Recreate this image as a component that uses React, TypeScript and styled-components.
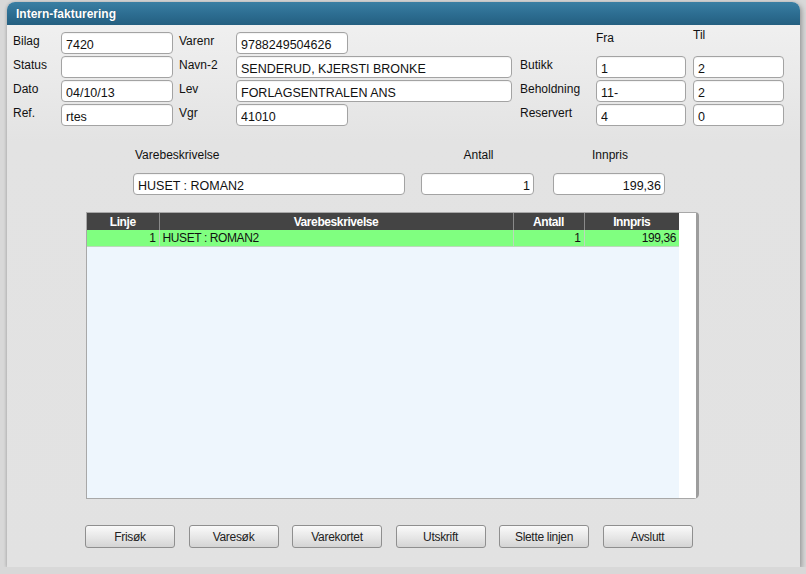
import styled, { createGlobalStyle } from 'styled-components';

const GlobalStyle = createGlobalStyle`
  html, body {
    margin: 0;
    padding: 0;
    background: #d8d8d8;
    font-family: 'Liberation Sans', Arial, sans-serif;
  }
`;

type Line = { linje: number; tekst: string; antall: number; innpris: string };

const lines: Line[] = [{ linje: 1, tekst: 'HUSET : ROMAN2', antall: 1, innpris: '199,36' }];

const buttons = ['Frisøk', 'Varesøk', 'Varekortet', 'Utskrift', 'Slette linjen', 'Avslutt'];

export default function App() {
  return (
    <>
      <GlobalStyle />
      <Window>
        <TitleBar>Intern-fakturering</TitleBar>
        <Body>
          <HeadForm>
            <Label>Bilag</Label>
            <Field $col="2" defaultValue="7420" />
            <Label $col="4">Varenr</Label>
            <Field $col="5" defaultValue="9788249504626" />
            <TopLabel $col="9">Fra</TopLabel>
            <TopLabel $col="11" $raise>Til</TopLabel>

            <Label>Status</Label>
            <Field $col="2" defaultValue="" />
            <Label $col="4">Navn-2</Label>
            <Field $col="5 / span 2" defaultValue="SENDERUD, KJERSTI BRONKE" />
            <Label $col="8">Butikk</Label>
            <Field $col="9" defaultValue="1" />
            <Field $col="11" defaultValue="2" />

            <Label>Dato</Label>
            <Field $col="2" defaultValue="04/10/13" />
            <Label $col="4">Lev</Label>
            <Field $col="5 / span 2" defaultValue="FORLAGSENTRALEN ANS" />
            <Label $col="8">Beholdning</Label>
            <Field $col="9" defaultValue="11-" />
            <Field $col="11" defaultValue="2" />

            <Label>Ref.</Label>
            <Field $col="2" defaultValue="rtes" />
            <Label $col="4">Vgr</Label>
            <Field $col="5" defaultValue="41010" />
            <Label $col="8">Reservert</Label>
            <Field $col="9" defaultValue="4" />
            <Field $col="11" defaultValue="0" />
          </HeadForm>

          <EntryRow>
            <EntryCol $w={272} $align="left">
              <EntryLabel>Varebeskrivelse</EntryLabel>
              <Field defaultValue="HUSET : ROMAN2" />
            </EntryCol>
            <EntryCol $w={113} $align="center">
              <EntryLabel>Antall</EntryLabel>
              <Field $right defaultValue="1" />
            </EntryCol>
            <EntryCol $w={112} $align="center">
              <EntryLabel>Innpris</EntryLabel>
              <Field $right defaultValue="199,36" />
            </EntryCol>
          </EntryRow>

          <GridBox>
            <Table>
              <colgroup>
                <col style={{ width: 72 }} />
                <col style={{ width: 354 }} />
                <col style={{ width: 71 }} />
                <col style={{ width: 95 }} />
              </colgroup>
              <thead>
                <tr>
                  <Th>Linje</Th>
                  <Th>Varebeskrivelse</Th>
                  <Th>Antall</Th>
                  <Th>Innpris</Th>
                </tr>
              </thead>
              <tbody>
                {lines.map((l) => (
                  <Row key={l.linje}>
                    <Td $right>{l.linje}</Td>
                    <Td>{l.tekst}</Td>
                    <Td $right>{l.antall}</Td>
                    <Td $right>{l.innpris}</Td>
                  </Row>
                ))}
              </tbody>
            </Table>
            <ScrollStrip />
          </GridBox>

          <ButtonBar>
            {buttons.map((b) => (
              <Button key={b}>{b}</Button>
            ))}
          </ButtonBar>
        </Body>
      </Window>
    </>
  );
}

const Window = styled.div`
  margin: 2px 0 0 7px;
  width: 793px;
  height: 565px;
  display: flex;
  flex-direction: column;
  border-radius: 8px 8px 0 0;
  background: linear-gradient(#f2f2f2, #e3e3e3 140px, #e2e2e2);
  box-shadow: 2px 2px 5px rgba(0, 0, 0, 0.28), -1px 0 3px rgba(0, 0, 0, 0.12);
`;

const TitleBar = styled.div`
  height: 23px;
  flex: none;
  border-radius: 8px 8px 0 0;
  background: linear-gradient(#3b7fa3, #2d6e92 50%, #245f80);
  color: #fff;
  font-weight: bold;
  font-size: 12px;
  line-height: 24px;
  padding-left: 9px;
  text-shadow: 0 0 1px rgba(0, 0, 0, 0.3);
`;

const Body = styled.div`
  flex: 1;
  display: flex;
  flex-direction: column;
  padding: 7px 0 0 6px;
`;

const HeadForm = styled.div`
  display: grid;
  grid-template-columns: 48px 112px 6px 57px 112px 164px 8px 76px 90px 7px 91px;
  grid-auto-rows: 22px;
  row-gap: 2px;
  align-items: stretch;
`;

const Label = styled.div<{ $col?: string }>`
  grid-column: ${(p) => p.$col ?? '1'};
  font-size: 12px;
  color: #111;
  padding-top: 2px;
  white-space: nowrap;
`;

const TopLabel = styled.div<{ $col: string; $raise?: boolean }>`
  grid-column: ${(p) => p.$col};
  font-size: 12px;
  color: #111;
  margin-top: ${(p) => (p.$raise ? '-4px' : '-1px')};
`;

const Field = styled.input.attrs({ readOnly: true, type: 'text' })<{ $col?: string; $right?: boolean }>`
  grid-column: ${(p) => p.$col ?? 'auto'};
  box-sizing: border-box;
  width: 100%;
  height: 22px;
  margin: 0;
  padding: 3px 3px 0 4px;
  border: 1px solid #a3a3a3;
  border-radius: 4px;
  background: #fff;
  font-family: 'Liberation Sans', Arial, sans-serif;
  font-size: 12.5px;
  color: #111;
  text-align: ${(p) => (p.$right ? 'right' : 'left')};
  box-shadow: inset 0 1px 1px rgba(0, 0, 0, 0.05);
  outline: none;
`;

const EntryRow = styled.div`
  display: flex;
  align-items: flex-end;
  margin: 22px 0 0 120px;
`;

const EntryCol = styled.div<{ $w: number; $align: string }>`
  width: ${(p) => p.$w}px;
  display: flex;
  flex-direction: column;
  gap: 11px;
  text-align: ${(p) => p.$align};
  & + & {
    margin-left: 16px;
  }
  &:last-child {
    margin-left: 19px;
  }
`;

const EntryLabel = styled.div`
  font-size: 12px;
  color: #111;
  line-height: 14px;
  padding-left: 2px;
`;

const GridBox = styled.div`
  margin: 17px 0 0 73px;
  width: 613px;
  height: 287px;
  box-sizing: border-box;
  display: flex;
  border: 1px solid #a8a8a8;
  border-right: 3px solid #9d9d9d;
  border-radius: 0 4px 5px 0;
  background: #fff;
`;

const Table = styled.table`
  width: 592px;
  border-collapse: collapse;
  table-layout: fixed;
  align-self: stretch;
  background: #eef6fd;
  display: block;
  font-size: 12px;
  letter-spacing: -0.4px;
  color: #111;
`;

const Th = styled.th`
  height: 17px;
  padding: 0 4px;
  background: #444;
  color: #fff;
  font-weight: bold;
  text-align: center;
  border-left: 1px solid #8a8a8a;
  &:first-child {
    border-left: none;
  }
`;

const Row = styled.tr`
  background: #80ff80;
`;

const Td = styled.td<{ $right?: boolean }>`
  height: 16px;
  padding: 0 3px;
  text-align: ${(p) => (p.$right ? 'right' : 'left')};
  border-left: 1px solid #bcd8bc;
  border-bottom: 1px solid #bcd8bc;
  white-space: nowrap;
  &:first-child {
    border-left: none;
  }
`;

const ScrollStrip = styled.div`
  flex: 1;
  background: #fff;
`;

const ButtonBar = styled.div`
  display: flex;
  gap: 13.5px;
  margin: 26px 0 0 72px;
`;

const Button = styled.button`
  width: 90px;
  height: 23px;
  padding: 0;
  border: 1px solid #8f8f8f;
  border-radius: 3px;
  background: linear-gradient(#fafafa, #e6e6e6 55%, #d4d4d4);
  font-family: 'Liberation Sans', Arial, sans-serif;
  font-size: 12px;
  letter-spacing: -0.3px;
  color: #222;
  cursor: pointer;
`;
